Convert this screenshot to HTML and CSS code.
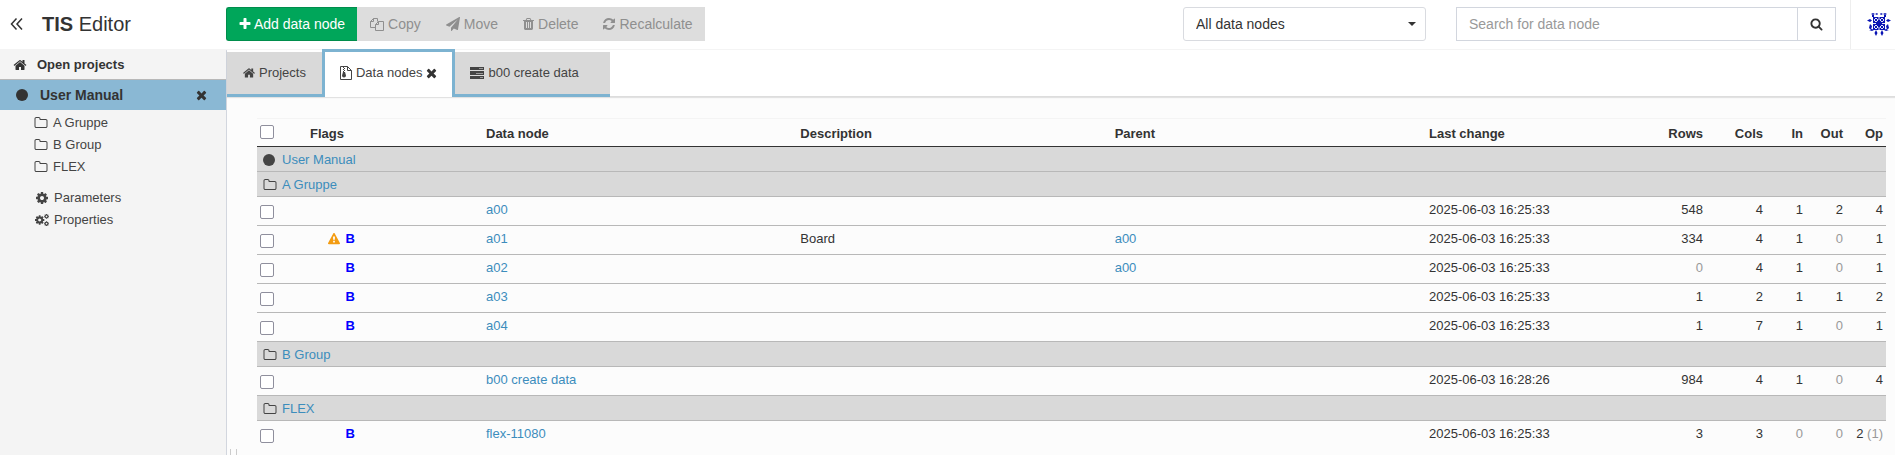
FILE: index.html
```html
<!doctype html>
<html lang="en">
  <head>
    <meta charset="utf-8">
    <meta name="viewport" content="width=device-width, initial-scale=1">
    <title>TIS Editor</title>
    <link rel="stylesheet" href="styles.css">
  </head>
  <body>
    <!-- icon sprite -->
    <svg class="sprite" aria-hidden="true">
      <symbol id="i-home" viewBox="64 0 1664 1792"><path d="M1472 992v480q0 26-19 45t-45 19h-384v-384h-256v384h-384q-26 0-45-19t-19-45v-480q0-1 .5-3t.5-3l575-474 575 474q1 2 1 6zm223-69l-62 74q-8 9-21 11h-3q-13 0-21-7l-692-577-692 577q-12 8-24 7-13-2-21-11l-62-74q-8-10-7-23.5t11-21.5l719-599q32-26 76-26t76 26l244 204v-195q0-14 9-23t23-9h192q14 0 23 9t9 23v408l219 182q10 8 11 21.5t-7 23.5z"/></symbol>
      <symbol id="i-plus" viewBox="192 0 1408 1792"><path d="M1600 736v192q0 40-28 68t-68 28h-416v416q0 40-28 68t-68 28h-192q-40 0-68-28t-28-68v-416h-416q-40 0-68-28t-28-68v-192q0-40 28-68t68-28h416v-416q0-40 28-68t68-28h192q40 0 68 28t28 68v416h416q40 0 68 28t28 68z"/></symbol>
      <symbol id="i-times" viewBox="192 0 1408 1792"><path d="M1490 1322q0 40-28 68l-136 136q-28 28-68 28t-68-28l-294-294-294 294q-28 28-68 28t-68-28l-136-136q-28-28-28-68t28-68l294-294-294-294q-28-28-28-68t28-68l136-136q28-28 68-28t68 28l294 294 294-294q28-28 68-28t68 28l136 136q28 28 28 68t-28 68l-294 294 294 294q28 28 28 68z"/></symbol>
      <symbol id="i-search" viewBox="0 0 1792 1792"><path d="M1216 832q0-185-131.500-316.500t-316.500-131.500-316.500 131.500-131.500 316.500 131.500 316.500 316.500 131.500 316.500-131.500 131.500-316.500zm512 832q0 52-38 90t-90 38q-54 0-90-38l-343-342q-179 124-399 124-143 0-273.500-55.500t-225-150-150-225-55.500-273.500 55.500-273.500 150-225 225-150 273.500-55.500 273.500 55.500 225 150 150 225 55.500 273.500q0 220-124 399l343 343q37 37 37 90z"/></symbol>
      <symbol id="i-cog" viewBox="0 0 1792 1792"><path d="M1152 896q0-106-75-181t-181-75-181 75-75 181 75 181 181 75 181-75 75-181zm512-109v222q0 12-8 23t-20 13l-185 28q-19 54-39 91 35 50 107 138 10 12 10 25t-9 23q-27 37-99 108t-94 71q-12 0-26-9l-138-108q-44 23-91 38-16 136-29 186-7 28-36 28h-222q-14 0-24.500-8.500t-11.500-21.500l-28-184q-49-16-90-37l-141 107q-10 9-25 9-14 0-25-11-126-114-165-168-7-10-7-23 0-12 8-23 15-21 51-66.500t54-70.500q-27-50-41-99l-183-27q-13-2-21-12.500t-8-23.500v-222q0-12 8-23t19-13l186-28q14-46 39-92-40-57-107-138-10-12-10-24 0-10 9-23 26-36 98.500-107.500t94.500-71.500q13 0 26 10l138 107q44-23 91-38 16-136 29-186 7-28 36-28h222q14 0 24.500 8.500t11.500 21.500l28 184q49 16 90 37l142-107q9-9 24-9 13 0 25 10 129 119 165 170 7 8 7 22 0 12-8 23-15 21-51 66.500t-54 70.500q26 50 41 98l183 28q13 2 21 12.500t8 23.500z"/></symbol>
      <symbol id="i-cogs" viewBox="0 0 1920 1792">
        <use href="#i-cog" x="-107" y="149" width="1493" height="1493"/>
        <use href="#i-cog" x="1190" y="10" width="780" height="780"/>
        <use href="#i-cog" x="1190" y="1010" width="780" height="780"/>
      </symbol>
      <symbol id="i-folder" viewBox="0 0 1792 1792"><path d="M1600 1312v-704q0-40-28-68t-68-28h-704q-40 0-68-28t-28-68v-64q0-40-28-68t-68-28h-320q-40 0-68 28t-28 68v960q0 40 28 68t68 28h1216q40 0 68-28t28-68zm128-704v704q0 92-66 158t-158 66h-1216q-92 0-158-66t-66-158v-960q0-92 66-158t158-66h320q92 0 158 66t66 158v32h672q92 0 158 66t66 158z"/></symbol>
      <symbol id="i-plane" viewBox="0 0 1792 1792"><path d="M1764 11q33 24 27 64l-256 1536q-5 29-32 45-14 8-31 8-11 0-24-5l-453-185-242 295q-18 23-49 23-13 0-22-4-19-7-30.500-23.500t-11.500-36.500v-349l864-1059-1069 925-395-162q-37-14-40-55-2-40 32-59l1664-960q15-9 32-9 20 0 36 11z"/></symbol>
      <symbol id="i-trash" viewBox="192 0 1408 1792"><path d="M704 1376v-704q0-14-9-23t-23-9h-64q-14 0-23 9t-9 23v704q0 14 9 23t23 9h64q14 0 23-9t9-23zm256 0v-704q0-14-9-23t-23-9h-64q-14 0-23 9t-9 23v704q0 14 9 23t23 9h64q14 0 23-9t9-23zm256 0v-704q0-14-9-23t-23-9h-64q-14 0-23 9t-9 23v704q0 14 9 23t23 9h64q14 0 23-9t9-23zm-544-992h448l-48-117q-7-9-17-11h-317q-10 2-17 11zm928 32v64q0 14-9 23t-23 9h-96v948q0 83-47 143.500t-113 60.500h-832q-66 0-113-58.500t-47-141.500v-952h-96q-14 0-23-9t-9-23v-64q0-14 9-23t23-9h309l70-167q15-37 54-63t79-26h320q40 0 79 26t54 63l70 167h309q14 0 23 9t9 23z"/></symbol>
      <symbol id="i-refresh" viewBox="128 0 1536 1792"><path d="M1639 1056q0 5-1 7-64 268-268 434.500t-478 166.500q-146 0-282.500-55t-243.500-157l-129 129q-19 19-45 19t-45-19-19-45v-448q0-26 19-45t45-19h448q26 0 45 19t19 45-19 45l-137 137q71 66 161 102t187 36q134 0 250-65t186-179q11-17 53-117 8-23 30-23h192q13 0 22.500 9.500t9.500 22.500zm25-800v448q0 26-19 45t-45 19h-448q-26 0-45-19t-19-45 19-45l138-138q-148-137-349-137-134 0-250 65t-186 179q-11 17-53 117-8 23-30 23h-199q-13 0-22.500-9.500t-9.500-22.500v-7q65-268 270-434.500t480-166.500q146 0 284 55.500t245 156.500l130-129q19-19 45-19t45 19 19 45z"/></symbol>
      <symbol id="i-warning" viewBox="0 0 1792 1792"><path d="M1024 1375v-190q0-14-9.500-23.500t-22.500-9.500h-192q-13 0-22.500 9.500t-9.500 23.500v190q0 14 9.500 23.500t22.500 9.500h192q13 0 22.500-9.500t9.500-23.500zm-2-374l18-459q0-12-10-19-13-11-24-11h-220q-11 0-24 11-10 7-10 21l17 457q0 10 10 16.500t24 6.500h185q14 0 23.500-6.500t10.500-16.500zm-14-934l768 1408q35 63-2 126-17 29-46.500 46t-63.500 17h-1536q-34 0-63.500-17t-46.500-46q-37-63-2-126l768-1408q17-31 47-49t65-18 65 18 47 49z"/></symbol>
      <symbol id="i-copy" viewBox="0 0 14 14"><path fill="none" stroke="currentColor" d="M5.500 10.500h-5v-6l3-3h4v3M3.500 1.500v3h-3M5.500 7.500l3-3h5v9h-8zM8.500 4.500v3h-3"/></symbol>
      <symbol id="i-archive" viewBox="0 0 12 14"><path fill="none" stroke="currentColor" d="M.5.500h7l4 4v9h-11zM7.500.5v4h4"/><path d="M3 1h1v1H3zM4 2h1v1H4zM3 3h1v1H3zM4 4h1v1H4zM3 5h1v1H3zM4 6h1l1 3.500a2 2 0 0 1-4 0L3 6z"/></symbol>
      <symbol id="i-server" viewBox="0 0 14 14"><path d="M0 1h14v3H0zM0 5h14v4H0zM0 10h14v3H0z"/><path fill="#999" d="M9 2h4v1H9zM6 7h7v1H6zM10 11h3v1h-3z"/></symbol>
      <symbol id="i-collapse" viewBox="0 0 14 14"><path fill="none" stroke="currentColor" stroke-width="1.500" d="M6.500 1.500L1.500 7l5 5.500M12 1.500L7 7l5 5.500"/></symbol>
      <symbol id="i-circle" viewBox="0 0 12 12"><circle cx="6" cy="6" r="6"/></symbol>
      <symbol id="i-avatar" viewBox="0 0 24 24">
        <path d="M6 5h12v13H6z"/>
        <path d="M4 2l2-1 2 1-2 1zM8 2l2-1 1 1-1 1zM13 2l1-1 2 1-2 1zM16 2l2-1 2 1-2 1zM5 3h2v2H5zM17 3h2v2h-2zM0 8.500L3 7l2 1.500L3 10zM19 8.500L21 7l3 1.500-3 1.500zM3 12l2 2-1 4-2-2zM21 12l-2 2 1 4 2-2zM2 18l3-1 2 1-2 1zM17 18l2-1 3 1-3 1zM9 18l1.500 3L9 24l-1.500-3zM15 18l1.500 3-1.500 3-1.500-3z"/>
        <path fill="none" stroke="#fff" stroke-width=".9" d="M9 6l2 2-2 2-2-2zM15 6l2 2-2 2-2-2zM9 13l2 2-2 2-2-2zM15 13l2 2-2 2-2-2zM12 5v3M12 15v3M6 11.500h3M15 11.500h3"/>
      </symbol>
    </svg>

    <header class="topbar">
      <div class="brand">
        <button type="button" class="plain" aria-label="Collapse sidebar"><svg class="icon collapse"><use href="#i-collapse"/></svg></button>
        <span class="title"><b>TIS</b> Editor</span>
      </div>
      <div class="btn-group">
        <button type="button" class="btn btn-add"><svg class="icon mid"><use href="#i-plus"/></svg>Add data node</button>
        <button type="button" class="btn" disabled><svg class="icon"><use href="#i-copy"/></svg>Copy</button>
        <button type="button" class="btn" disabled><svg class="icon"><use href="#i-plane"/></svg>Move</button>
        <button type="button" class="btn" disabled><svg class="icon narrow"><use href="#i-trash"/></svg>Delete</button>
        <button type="button" class="btn" disabled><svg class="icon mid"><use href="#i-refresh"/></svg>Recalculate</button>
      </div>
      <div class="filter">
        <select aria-label="Filter data nodes">
          <option>All data nodes</option>
        </select>
      </div>
      <form class="search">
        <input type="text" placeholder="Search for data node" aria-label="Search for data node">
        <button type="button" aria-label="Search"><svg class="icon"><use href="#i-search"/></svg></button>
      </form>
      <a href="#" class="user" aria-label="User"><svg class="avatar"><use href="#i-avatar"/></svg></a>
    </header>

    <div class="wrapper">
      <nav class="sidebar">
        <a href="#" class="open-projects"><svg class="icon"><use href="#i-home"/></svg>Open projects</a>
        <div class="project">
          <a href="#"><svg class="icon dot"><use href="#i-circle"/></svg>User Manual</a>
          <button type="button" class="plain" aria-label="Close project"><svg class="icon narrow"><use href="#i-times"/></svg></button>
        </div>
        <ul class="tree">
          <li><a href="#"><svg class="icon"><use href="#i-folder"/></svg>A Gruppe</a></li>
          <li><a href="#"><svg class="icon"><use href="#i-folder"/></svg>B Group</a></li>
          <li><a href="#"><svg class="icon"><use href="#i-folder"/></svg>FLEX</a></li>
        </ul>
        <ul class="tree settings">
          <li><a href="#"><svg class="icon"><use href="#i-cog"/></svg>Parameters</a></li>
          <li><a href="#"><svg class="icon"><use href="#i-cogs"/></svg>Properties</a></li>
        </ul>
      </nav>

      <main class="content">
        <div class="tabs">
          <a href="#" class="tab first"><svg class="icon mid"><use href="#i-home"/></svg>Projects</a>
          <div class="tab active">
            <a href="#"><svg class="icon mid"><use href="#i-archive"/></svg>Data nodes</a>
            <button type="button" class="plain" aria-label="Close tab"><svg class="icon narrow"><use href="#i-times"/></svg></button>
          </div>
          <a href="#" class="tab last"><svg class="icon"><use href="#i-server"/></svg>b00 create data</a>
        </div>

        <div class="table-box">
          <table>
            <colgroup>
              <col class="c-check"><col class="c-flags"><col><col><col><col class="c-date">
              <col class="c-rows"><col class="c-cols"><col class="c-num"><col class="c-num"><col class="c-num">
            </colgroup>
            <thead>
              <tr>
                <th><input type="checkbox" aria-label="Select all"></th>
                <th>Flags</th>
                <th>Data node</th>
                <th>Description</th>
                <th>Parent</th>
                <th>Last change</th>
                <th class="num">Rows</th>
                <th class="num">Cols</th>
                <th class="num">In</th>
                <th class="num">Out</th>
                <th class="num">Op</th>
              </tr>
            </thead>
            <tbody>
              <tr class="group"><td colspan="11"><a href="#"><svg class="icon dot"><use href="#i-circle"/></svg>User Manual</a></td></tr>
              <tr class="group"><td colspan="11"><a href="#"><svg class="icon"><use href="#i-folder"/></svg>A Gruppe</a></td></tr>
              <tr>
                <td><input type="checkbox" aria-label="Select a00"></td>
                <td></td>
                <td><a href="#">a00</a></td><td></td><td></td>
                <td>2025-06-03 16:25:33</td>
                <td class="num">548</td><td class="num">4</td><td class="num">1</td><td class="num">2</td><td class="num">4</td>
              </tr>
              <tr>
                <td><input type="checkbox" aria-label="Select a01"></td>
                <td><div class="flags"><svg class="icon warn"><use href="#i-warning"/></svg><b>B</b></div></td>
                <td><a href="#">a01</a></td><td>Board</td><td><a href="#">a00</a></td>
                <td>2025-06-03 16:25:33</td>
                <td class="num">334</td><td class="num">4</td><td class="num">1</td><td class="num zero">0</td><td class="num">1</td>
              </tr>
              <tr>
                <td><input type="checkbox" aria-label="Select a02"></td>
                <td><div class="flags"><b>B</b></div></td>
                <td><a href="#">a02</a></td><td></td><td><a href="#">a00</a></td>
                <td>2025-06-03 16:25:33</td>
                <td class="num zero">0</td><td class="num">4</td><td class="num">1</td><td class="num zero">0</td><td class="num">1</td>
              </tr>
              <tr>
                <td><input type="checkbox" aria-label="Select a03"></td>
                <td><div class="flags"><b>B</b></div></td>
                <td><a href="#">a03</a></td><td></td><td></td>
                <td>2025-06-03 16:25:33</td>
                <td class="num">1</td><td class="num">2</td><td class="num">1</td><td class="num">1</td><td class="num">2</td>
              </tr>
              <tr>
                <td><input type="checkbox" aria-label="Select a04"></td>
                <td><div class="flags"><b>B</b></div></td>
                <td><a href="#">a04</a></td><td></td><td></td>
                <td>2025-06-03 16:25:33</td>
                <td class="num">1</td><td class="num">7</td><td class="num">1</td><td class="num zero">0</td><td class="num">1</td>
              </tr>
              <tr class="group"><td colspan="11"><a href="#"><svg class="icon"><use href="#i-folder"/></svg>B Group</a></td></tr>
              <tr>
                <td><input type="checkbox" aria-label="Select b00 create data"></td>
                <td></td>
                <td><a href="#">b00 create data</a></td><td></td><td></td>
                <td>2025-06-03 16:28:26</td>
                <td class="num">984</td><td class="num">4</td><td class="num">1</td><td class="num zero">0</td><td class="num">4</td>
              </tr>
              <tr class="group"><td colspan="11"><a href="#"><svg class="icon"><use href="#i-folder"/></svg>FLEX</a></td></tr>
              <tr>
                <td><input type="checkbox" aria-label="Select flex-11080"></td>
                <td><div class="flags"><b>B</b></div></td>
                <td><a href="#">flex-11080</a></td><td></td><td></td>
                <td>2025-06-03 16:25:33</td>
                <td class="num">3</td><td class="num">3</td><td class="num zero">0</td><td class="num zero">0</td><td class="num">2 <span class="zero">(1)</span></td>
              </tr>
            </tbody>
          </table>
        </div>
        <div class="resizer"></div>
      </main>
    </div>
  </body>
</html>
```
FILE: styles.css
```css
* {
  box-sizing: border-box;
}

html, body {
  height: 100%;
}

body {
  margin: 0;
  display: flex;
  flex-direction: column;
  overflow: hidden;
  font-family: "Liberation Sans", Arial, sans-serif;
  font-size: 13px;
  line-height: 18px;
  color: #333;
  background: #fcfcfc;
}

a {
  color: #3c8dbc;
  text-decoration: none;
}

button, input, select {
  font-family: inherit;
  font-size: 14px;
  color: #333;
}

ul {
  list-style: none;
  margin: 0;
  padding: 0;
}

.sprite {
  display: none;
}

.icon {
  width: 14px;
  height: 14px;
  flex: none;
  fill: currentColor;
}

.icon.mid {
  width: 12px;
}

.icon.narrow {
  width: 11px;
}

.plain {
  display: flex;
  padding: 0;
  border: 0;
  background: none;
}

/* top bar */
.topbar {
  display: flex;
  align-items: center;
  flex: none;
  height: 50px;
  padding-bottom: 1px;
  border-bottom: 1px solid #f4f4f4;
  background: #fff;
}

.brand {
  display: flex;
  align-items: center;
  gap: 18px;
  width: 226px;
  padding-left: 10px;
}

.title {
  font-size: 20px;
  line-height: 24px;
}

.btn-group {
  display: flex;
}

.btn {
  display: flex;
  align-items: center;
  gap: 4px;
  height: 34px;
  padding: 0 12px 0 13px;
  border: 0;
  background: #ddd;
  color: #8f8f8f;
}

.btn-add {
  gap: 3px;
  padding: 0 12px;
  border: 1px solid #008d4c;
  border-right: 0;
  border-radius: 3px 0 0 3px;
  background: #00a65a;
  color: #fff;
}

.filter {
  position: relative;
  width: 243px;
  margin-left: auto;
  margin-right: 30px;
}

.filter select {
  width: 100%;
  height: 34px;
  padding: 0 12px;
  border: 1px solid #d9dbe0;
  border-radius: 3px;
  background: #fff;
  appearance: none;
}

.filter::after {
  content: "";
  position: absolute;
  right: 10px;
  top: 15px;
  border: 4px solid transparent;
  border-top-color: #333;
  border-bottom: 0;
}

.search {
  display: flex;
  width: 380px;
  margin-right: 14px;
}

.search input {
  flex: 1;
  height: 34px;
  padding: 0 12px;
  border: 1px solid #d2d6de;
}

.search input::placeholder {
  color: #999;
}

.search button {
  display: flex;
  align-items: center;
  justify-content: center;
  width: 39px;
  margin-left: -1px;
  padding: 0;
  border: 1px solid #d2d6de;
  background: #fff;
}

.search .icon {
  width: 13px;
}

.user {
  display: flex;
  align-items: center;
  width: 45px;
  height: 49px;
  padding-left: 16px;
  border-left: 1px solid #eee;
}

.avatar {
  width: 24px;
  height: 24px;
  fill: #0a14b4;
}

/* sidebar */
.wrapper {
  display: flex;
  flex: 1;
  min-height: 0;
}

.sidebar {
  width: 227px;
  flex: none;
  border-right: 1px solid #d2d6de;
  background: #f4f4f4;
}

.sidebar a {
  display: flex;
  align-items: center;
  color: #444;
}

.sidebar .open-projects {
  height: 30px;
  padding-left: 13px;
  gap: 10px;
  border-bottom: 1px solid #b8b8b8;
  font-weight: bold;
  color: #333;
}

.project {
  display: flex;
  align-items: center;
  justify-content: space-between;
  height: 30px;
  padding: 0 19px 0 16px;
  background: #8ab8d4;
  font-size: 14px;
  font-weight: bold;
}

.project a {
  gap: 12px;
  color: #333;
}

.dot {
  width: 12px;
  height: 12px;
}

.tree {
  padding: 2px 0 0 34px;
}

.tree a {
  height: 22px;
  gap: 5px;
}

.settings {
  padding: 9px 0 0 35px;
}

/* tabs */
.content {
  display: flex;
  flex-direction: column;
  flex: 1;
  min-width: 0;
}

.tabs {
  display: flex;
  align-items: flex-end;
  flex: none;
  height: 47px;
  border-bottom: 1px solid #ddd;
  background: #fff;
  box-shadow: 0 1px 1px rgba(0, 0, 0, 0.1);
}

.tab {
  display: flex;
  align-items: center;
  gap: 4px;
  height: 45px;
  margin-bottom: -1px;
  padding: 0 15px;
  border-bottom: 3px solid #7db3d1;
  background: #d9d9d9;
  color: #444;
}

.tab a {
  display: flex;
  align-items: center;
  gap: 4px;
  color: #444;
}

.tab.first {
  padding: 0 16px;
}

.tab.active {
  height: 48px;
  padding-bottom: 4px;
  border: 3px solid #7db3d1;
  border-bottom: 0;
  background: #fff;
}

.tab.last {
  padding-right: 31px;
}

/* data table */
.table-box {
  flex: 1;
  min-height: 0;
  padding: 21px 9px 0 30px;
  overflow: hidden;
}

table {
  width: 100%;
  table-layout: fixed;
  border-collapse: separate;
  border-spacing: 0;
}

.c-check { width: 50px; }
.c-flags { width: 176px; }
.c-date { width: 200px; }
.c-rows { width: 80px; }
.c-cols { width: 60px; }
.c-num { width: 40px; }

th, td {
  height: 29px;
  padding: 4px 3px 2px;
  border-bottom: 1px solid #b8b8b8;
  text-align: left;
  vertical-align: top;
  white-space: nowrap;
}

th {
  padding-top: 6px;
  border-top: 1px solid #f4f4f4;
  border-bottom-color: #333;
}

tbody tr:last-child td {
  border-bottom: 0;
}

.num {
  text-align: right;
}

.zero {
  color: #999;
}

.group td {
  height: 25px;
  padding: 4px 6px 2px;
  background: #d9d9d9;
}

.group a {
  display: flex;
  align-items: center;
  gap: 5px;
}

.group .icon {
  color: #444;
}

.group .dot {
  margin-right: 2px;
}

input[type="checkbox"] {
  appearance: none;
  display: block;
  width: 14px;
  height: 14px;
  margin: 0;
  border: 1px solid #8f8f9d;
  border-radius: 2px;
  background: #fff;
}

td input[type="checkbox"] {
  margin-top: 4px;
}

.flags {
  display: flex;
  align-items: center;
  justify-content: flex-end;
  gap: 6px;
  width: 45px;
  color: #00f;
}

.warn {
  width: 12px;
  height: 12px;
  color: #f39c12;
}

.resizer {
  position: absolute;
  bottom: 0;
  left: 230px;
  width: 7px;
  height: 6px;
  border: solid #ccc;
  border-width: 0 1px;
}
```
